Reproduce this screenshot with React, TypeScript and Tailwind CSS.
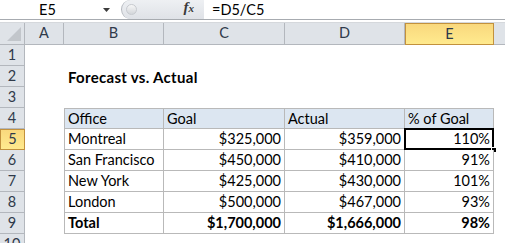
import React from "react";

const cols = [
  { key: "A", w: "w-[39px]" },
  { key: "B", w: "w-[100px]" },
  { key: "C", w: "w-[121px]" },
  { key: "D", w: "w-[120px]" },
  { key: "E", w: "w-[89px]" },
];

type Cell = { t: string; right?: boolean; bold?: boolean };

const rows: (Cell[] | null)[] = [
  null,
  null,
  null,
  [{ t: "Office" }, { t: "Goal" }, { t: "Actual" }, { t: "% of Goal" }],
  [{ t: "Montreal" }, { t: "$325,000", right: true }, { t: "$359,000", right: true }, { t: "110%", right: true }],
  [{ t: "San Francisco" }, { t: "$450,000", right: true }, { t: "$410,000", right: true }, { t: "91%", right: true }],
  [{ t: "New York" }, { t: "$425,000", right: true }, { t: "$430,000", right: true }, { t: "101%", right: true }],
  [{ t: "London" }, { t: "$500,000", right: true }, { t: "$467,000", right: true }, { t: "93%", right: true }],
  [
    { t: "Total", bold: true },
    { t: "$1,700,000", right: true, bold: true },
    { t: "$1,666,000", right: true, bold: true },
    { t: "98%", right: true, bold: true },
  ],
  null,
];

function FormulaBar() {
  return (
    <div className="flex h-[20px] bg-white border-b border-[#a7abb0]">
      <div className="w-[121px] flex items-center relative">
        <span className="w-[95px] text-center pt-[1px]">E5</span>
        <svg width="8" height="5" viewBox="0 0 8 5" className="absolute left-[103px] top-[8px]">
          <path d="M0 0 H7 L3.5 4 Z" fill="#3b3b3b" />
        </svg>
      </div>
      <div className="w-[83px] relative bg-gradient-to-b from-[#eef0f3] to-[#dfe2e7] rounded-l-full border-l border-[#b4b8be]">
        <div className="absolute left-[4px] top-[4px] w-[11px] h-[11px] rounded-full bg-gradient-to-b from-[#f7f7f7] to-[#d3d6da] border border-[#c7cacf]" />
        <span
          className="absolute right-[10px] top-[0px] text-[15px] italic font-bold text-[#3a3a3a]"
          style={{ fontFamily: '"Liberation Serif", serif' }}
        >
          f<span className="text-[11px]">x</span>
        </span>
      </div>
      <div className="flex-1 flex items-center pl-[8px] pt-[1px]">=D5/C5</div>
    </div>
  );
}

function ColHeaders() {
  return (
    <div className="flex h-[23px] mt-[2px] border-t border-[#d5d8dc]">
      <div className="w-[25px] h-full bg-[#dfe3e8] border-r border-b border-[#b3b7bd] relative">
        <svg width="14" height="14" viewBox="0 0 14 14" className="absolute left-[7px] top-[4px]">
          <path d="M14 0 V14 H0 Z" fill="#c2c6cb" />
        </svg>
      </div>
      {cols.map((c) =>
        c.key === "E" ? (
          <div
            key={c.key}
            className={`${c.w} h-full flex items-center justify-center bg-gradient-to-b from-[#f9d87d] to-[#ffea8e] border border-[#c2913d] text-[#2f3a4a]`}
          >
            {c.key}
          </div>
        ) : (
          <div
            key={c.key}
            className={`${c.w} h-full flex items-center justify-center bg-[#dfe3e8] border-r border-b border-[#b3b7bd] text-[#2f3a4a]`}
          >
            {c.key}
          </div>
        )
      )}
      <div className="flex-1 h-full bg-[#dfe3e8] border-b border-[#b3b7bd]" />
    </div>
  );
}

function Row({ n, cells }: { n: number; cells: Cell[] | null }) {
  const inTable = cells !== null;
  const isHead = n === 4;
  return (
    <div className="flex h-[21px]">
      <div
        className={
          n === 5
            ? "w-[25px] h-full flex items-center justify-center bg-gradient-to-b from-[#f9d87d] to-[#ffea8e] border border-[#c2913d] text-[#2f3a4a]"
            : "w-[25px] h-full flex items-center justify-center bg-[#dfe3e8] border-r border-b border-[#b3b7bd] text-[#2f3a4a]"
        }
      >
        {n}
      </div>
      <div className="w-[39px] h-full" />
      {inTable ? (
        cells!.map((c, i) => (
          <div
            key={i}
            className={[
              cols[i + 1].w,
              "h-full flex items-center pt-[1px] px-[3px] border-r border-b border-[#b9b9b9] relative",
              i === 0 ? "border-l" : "",
              isHead ? "border-t bg-[#dce6f1]" : "bg-white",
              c.right ? "justify-end" : "justify-start",
              c.bold ? "font-bold" : "",
            ].join(" ")}
          >
            {c.t}
            {n === 5 && i === 3 && (
              <>
                <div className="absolute left-[-1px] top-[-1px] right-[-1px] bottom-[-1px] border-2 border-black" />
                <div className="absolute right-[-4px] bottom-[-4px] w-[6px] h-[6px] bg-black border border-white" />
              </>
            )}
          </div>
        ))
      ) : n === 2 ? (
        <div className="flex items-center pl-[4px] pt-[1px] font-bold text-[15px] tracking-[0.3px]">
          Forecast vs. Actual
        </div>
      ) : null}
    </div>
  );
}

export default function App() {
  return (
    <div
      className="w-[505px] h-[243px] overflow-hidden bg-white text-[14.5px] text-black leading-none"
      style={{ fontFamily: 'Lato, "Liberation Sans", sans-serif' }}
    >
      <FormulaBar />
      <ColHeaders />
      {rows.map((r, i) => (
        <Row key={i} n={i + 1} cells={r} />
      ))}
    </div>
  );
}
